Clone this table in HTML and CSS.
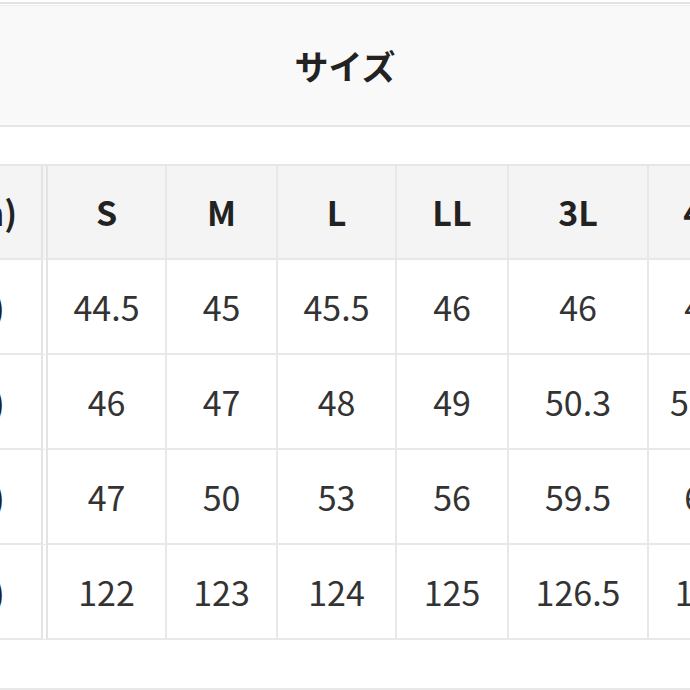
FILE: index.html
```html
<!DOCTYPE html>
<html lang="ja">
<head>
<meta charset="utf-8">
<title>サイズ</title>
<link rel="stylesheet" href="styles.css">
</head>
<body>
<div class="page">
  <div class="title-wrap">
    <div class="title">サイズ</div>
  </div>
  <div class="table-wrap">
    <div class="size-grid">
      <div class="cell head label">サイズ(cm)</div>
      <div class="cell head">S</div>
      <div class="cell head">M</div>
      <div class="cell head">L</div>
      <div class="cell head">LL</div>
      <div class="cell head">3L</div>
      <div class="cell head">4L</div>

      <div class="cell label">肩幅 (cm)</div>
      <div class="cell">44.5</div>
      <div class="cell">45</div>
      <div class="cell">45.5</div>
      <div class="cell">46</div>
      <div class="cell">46</div>
      <div class="cell">47</div>

      <div class="cell label">袖丈 (cm)</div>
      <div class="cell">46</div>
      <div class="cell">47</div>
      <div class="cell">48</div>
      <div class="cell">49</div>
      <div class="cell">50.3</div>
      <div class="cell">51.5</div>

      <div class="cell label">身幅 (cm)</div>
      <div class="cell">47</div>
      <div class="cell">50</div>
      <div class="cell">53</div>
      <div class="cell">56</div>
      <div class="cell">59.5</div>
      <div class="cell">62</div>

      <div class="cell label">着丈 (cm)</div>
      <div class="cell">122</div>
      <div class="cell">123</div>
      <div class="cell">124</div>
      <div class="cell">125</div>
      <div class="cell">126.5</div>
      <div class="cell">128</div>
    </div>
  </div>
  <div class="footer-line"></div>
</div>
</body>
</html>
```

FILE: styles.css
```css
html, body {
  margin: 0;
  padding: 0;
  background: #ffffff;
  overflow: hidden;
}

.page {
  width: 690px;
  height: 690px;
  overflow: hidden;
  font-family: "Noto Sans CJK JP", "Noto Sans", sans-serif;
  color: #333333;
}

.title-wrap {
  margin-top: 2px;
  border-top: 2px solid #e3e3e3;
  padding-top: 1px;
}

.title {
  height: 119px;
  border-top: 1px solid #efefef;
  border-bottom: 2px solid #e6e6e6;
  background: #f9f9f9;
  display: flex;
  align-items: center;
  justify-content: center;
  font-size: 34px;
  font-weight: 700;
  color: #222222;
  line-height: 1;
}

.table-wrap {
  margin-top: 37px;
  overflow: hidden;
}

.size-grid {
  display: grid;
  grid-template-columns: 232px 119px 111px 119px 112px 140px 110px;
  grid-auto-rows: 95px;
  grid-template-rows: 94px;
  margin-left: -184px;
  width: max-content;
  border-top: 2px solid #e6e6e6;
}

.cell {
  display: flex;
  align-items: center;
  justify-content: center;
  border-right: 2px solid #e8e8e8;
  border-bottom: 2px solid #e8e8e8;
  font-size: 34px;
  font-weight: 400;
  color: #333333;
  line-height: 1;
  white-space: nowrap;
  background: #ffffff;
}

.cell.head {
  background: #f4f4f4;
  font-weight: 700;
  color: #222222;
}

.cell.label {
  border-right: 7px double #e4e4e4;
  font-weight: 700;
  color: #222222;
}

.footer-line {
  height: 48px;
  border-bottom: 2px solid #e8e8e8;
}
```
